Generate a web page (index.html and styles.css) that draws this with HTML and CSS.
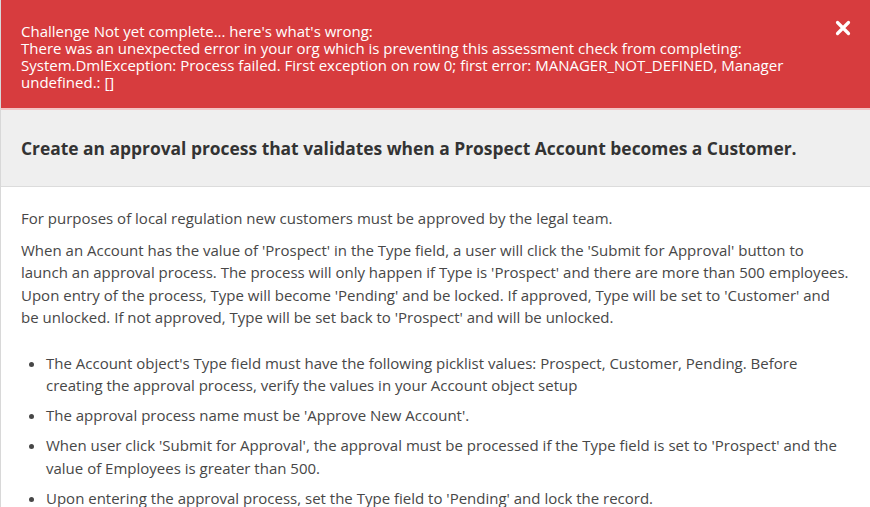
FILE: index.html
```html
<!DOCTYPE html>
<html>
<head>
<meta charset="utf-8">
<link rel="stylesheet" href="styles.css">
</head>
<body>
<div class="page">
  <div class="alert">
    <div class="alert-text">Challenge Not yet complete... here's what's wrong:<br>There was an unexpected error in your org which is preventing this assessment check from completing:<br>System.DmlException: Process failed. First exception on row 0; first error: MANAGER_NOT_DEFINED, Manager undefined.: []</div>
    <button class="close" aria-label="Close">
      <svg width="16" height="16" viewBox="0 0 16 16"><path d="M2.5 2.5 L13.5 13.5 M13.5 2.5 L2.5 13.5" stroke="#fff" stroke-width="3.2" stroke-linecap="round"/></svg>
    </button>
  </div>
  <div class="title-bar">
    <h2 class="title">Create an approval process that validates when a Prospect Account becomes a Customer.</h2>
  </div>
  <div class="content">
    <p>For purposes of local regulation new customers must be approved by the legal team.</p>
    <p>When an Account has the value of 'Prospect' in the Type field, a user will click the 'Submit for Approval' button to launch an approval process. The process will only happen if Type is 'Prospect' and there are more than 500 employees. Upon entry of the process, Type will become 'Pending' and be locked. If approved, Type will be set to 'Customer' and be unlocked. If not approved, Type will be set back to 'Prospect' and will be unlocked.</p>
    <ul>
      <li>The Account object's Type field must have the following picklist values: Prospect, Customer, Pending. Before creating the approval process, verify the values in your Account object setup</li>
      <li>The approval process name must be 'Approve New Account'.</li>
      <li>When user click 'Submit for Approval', the approval must be processed if the Type field is set to 'Prospect' and the value of Employees is greater than 500.</li>
      <li>Upon entering the approval process, set the Type field to 'Pending' and lock the record.</li>
    </ul>
  </div>
</div>
</body>
</html>
```

FILE: styles.css
```css
html, body {
  margin: 0;
  padding: 0;
  background: #fff;
}
body {
  font-family: "Open Sans", "Noto Sans", sans-serif;
  overflow: hidden;
}
.page {
  border-left: 1px solid #d8d8d8;
  min-height: 507px;
}
.alert {
  background: #d73c3e;
  border-bottom: 2px solid #f2c4c4;
  height: 110px;
  box-sizing: border-box;
  display: flex;
  justify-content: space-between;
  align-items: flex-start;
  padding: 23px 19px 0 20px;
}
.alert-text {
  color: #fff;
  font-size: 15px;
  line-height: 17px;
  max-width: 780px;
}
.close {
  background: none;
  border: 0;
  padding: 0;
  margin: -3px 0 0 0;
  width: 16px;
  height: 16px;
  cursor: pointer;
}
.close svg { display: block; }
.title-bar {
  background: #efefef;
  border-bottom: 1px solid #dcdcdc;
  height: 77px;
  box-sizing: border-box;
  display: flex;
  align-items: center;
  padding: 0 20px;
}
.title {
  margin: 0;
  font-size: 17.4px;
  font-weight: 700;
  color: #333;
}
.content {
  padding: 20px 20px 0 20px;
  color: #474747;
  font-size: 15px;
  line-height: 22.5px;
}
.content p {
  margin: 0 0 9px 0;
}
.content ul {
  margin: 23px 0 0 0;
  padding-left: 25px;
}
.content li {
  margin-bottom: 7.5px;
}
```
